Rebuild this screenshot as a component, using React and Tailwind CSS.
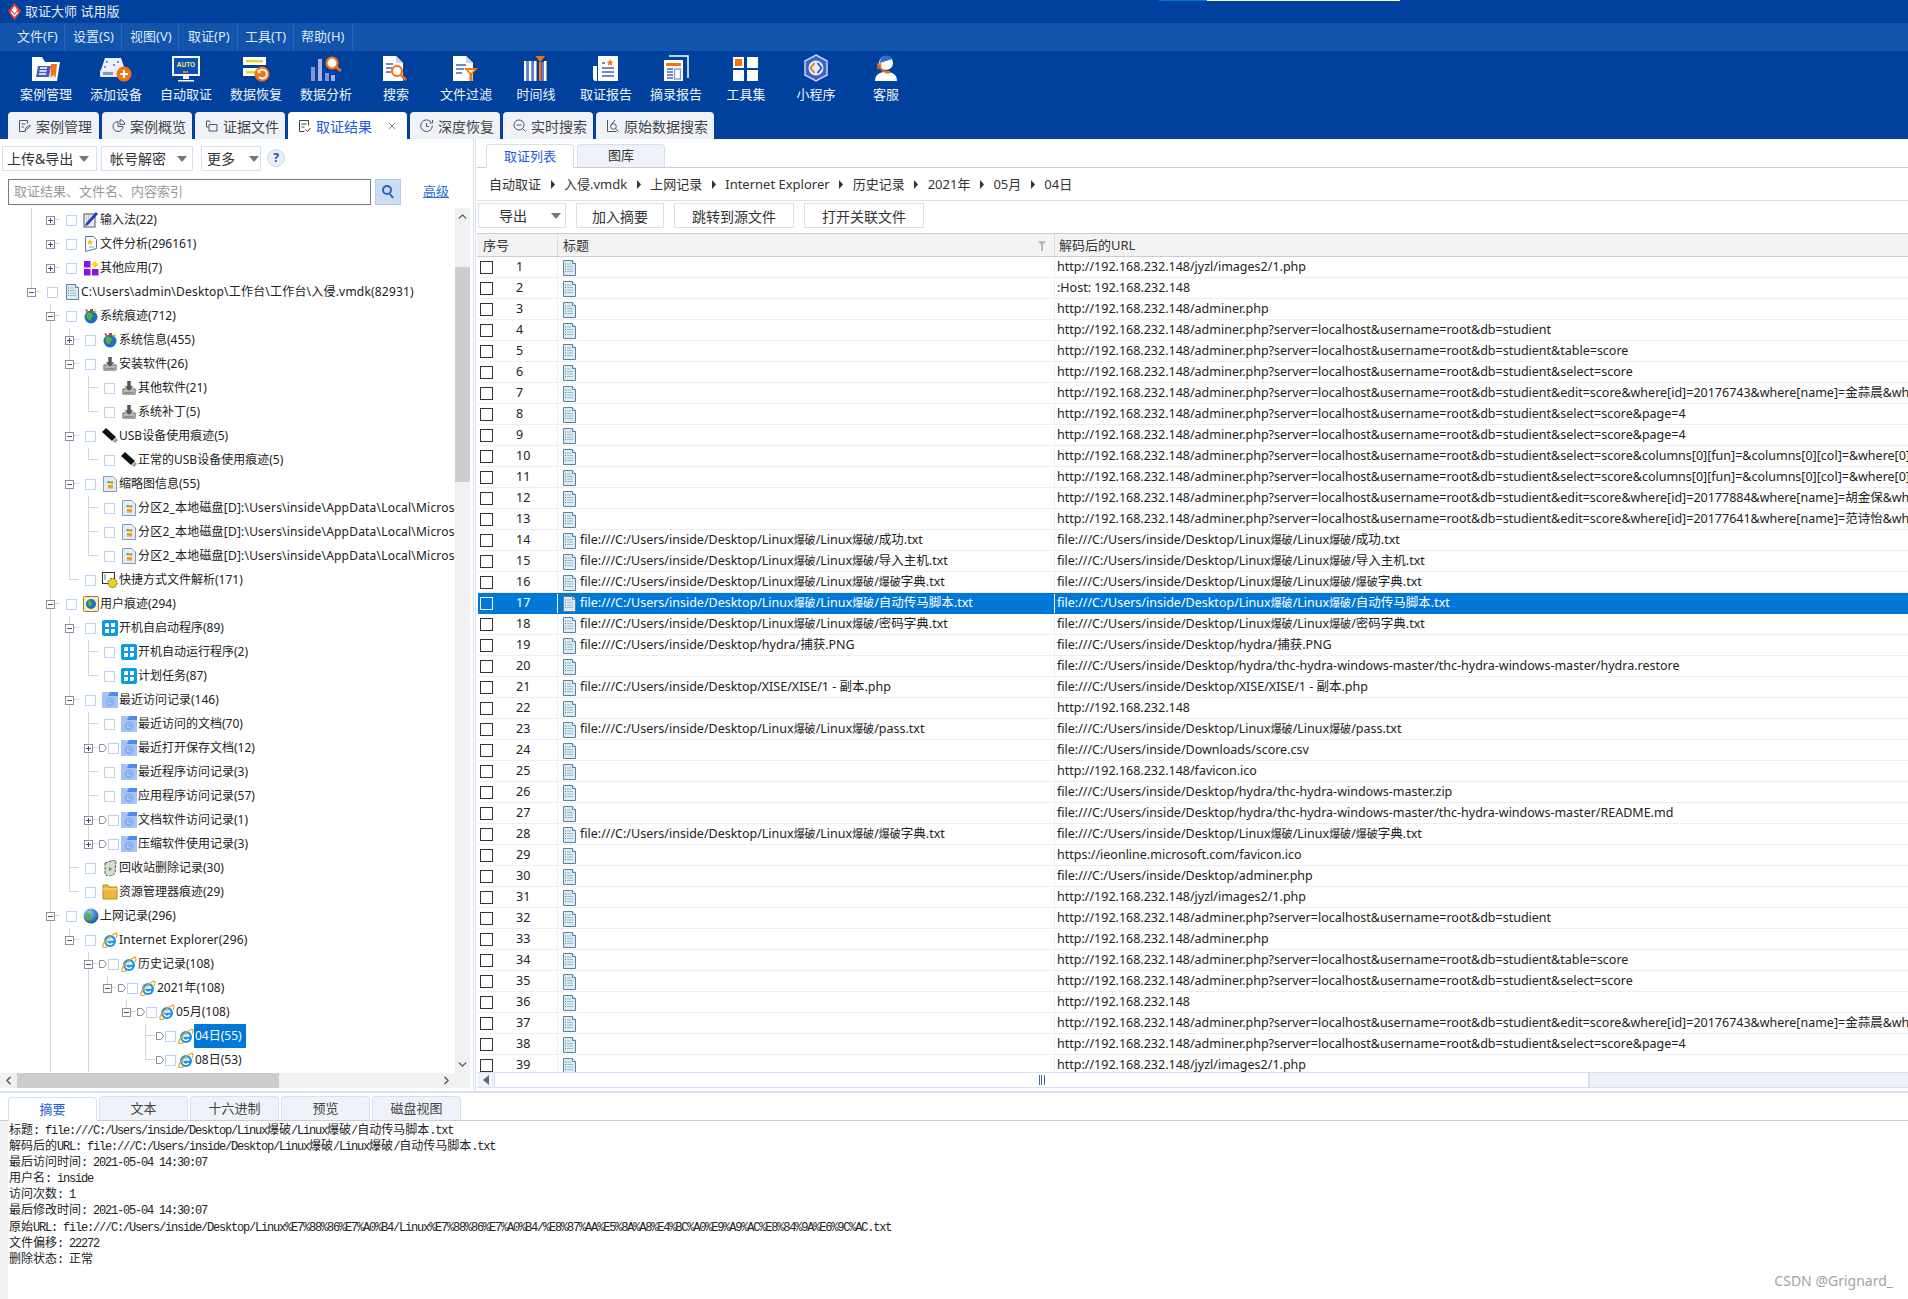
import { ChevronUp, ChevronDown, ChevronLeft, ChevronRight, X } from "lucide-react";

// ---------- toolbar icons ----------
const PERI = "#8693d6";
const ORG = "#f5730f";

const CaseIcon = () => (
  <svg width="32" height="26" viewBox="0 0 32 26">
    <path d="M2 1h10l3 5h15l-3 19H2z" fill="#fff" />
    <path d="M8 10h13l-2 11H6z" fill="#4a5fc0" />
    <path d="M10 12h7M9.500 15h7M9 18h7" stroke="#fff" strokeWidth="1.5" />
    <path d="M21 8h6l-1.500 14-2-3-3 3z" fill={ORG} />
  </svg>
);
const DeviceIcon = () => (
  <svg width="32" height="26" viewBox="0 0 32 26">
    <path d="M5 2h16l4 12H1z" fill="#eef1fb" />
    <circle cx="7" cy="6" r="1" fill="#5a6cc8" />
    <circle cx="18" cy="6" r="1" fill="#5a6cc8" />
    <circle cx="5" cy="11" r="1" fill="#5a6cc8" />
    <circle cx="14" cy="9" r="1" fill="#5a6cc8" />
    <rect x="0" y="14" width="24" height="7" rx="1" fill="#e6eaf8" />
    <rect x="3" y="16" width="10" height="3" fill={PERI} />
    <circle cx="24" cy="18" r="7.500" fill={ORG} />
    <path d="M24 14v8M20 18h8" stroke="#fff" strokeWidth="2.200" />
  </svg>
);
const AutoIcon = () => (
  <svg width="28" height="26" viewBox="0 0 28 26">
    <rect x="0" y="0" width="28" height="20" fill="#fff" />
    <rect x="2" y="2" width="24" height="16" fill="#0a4fc0" />
    <text x="14" y="11" textAnchor="middle" fontSize="6.500" fontWeight="700" fill="#ffe94a" fontFamily="Liberation Sans">AUTO</text>
    <rect x="11" y="15" width="5" height="2" fill={ORG} />
    <path d="M11 20h6v3h-6zM6 24h16v1.500H6z" fill="#fff" />
  </svg>
);
const RecoverIcon = () => (
  <svg width="28" height="26" viewBox="0 0 28 26">
    <rect x="1" y="1" width="23" height="8" fill="#fff" />
    <rect x="4" y="4" width="17" height="2.500" fill="#e8d52a" />
    <rect x="1" y="12" width="17" height="8" fill="#fff" />
    <rect x="4" y="15" width="10" height="2.500" fill="#e8d52a" />
    <circle cx="20" cy="18" r="7.500" fill={ORG} />
    <path d="M17 15a4.500 4.500 0 1 1 0 6" fill="none" stroke="#fff" strokeWidth="1.800" />
    <path d="M15 13.500l1 4 3.500-1.500z" fill="#fff" />
  </svg>
);
const AnalyzeIcon = () => (
  <svg width="32" height="26" viewBox="0 0 32 26">
    <rect x="1" y="11" width="4" height="14" fill={PERI} />
    <rect x="8" y="3" width="4" height="22" fill="#a8b2e6" />
    <rect x="15" y="17" width="4" height="8" fill={PERI} />
    <rect x="21" y="19" width="4" height="6" fill="#a8b2e6" />
    <circle cx="22" cy="7" r="5.500" fill="#fff" stroke={ORG} strokeWidth="2.200" />
    <path d="M26 11l5 4" stroke={ORG} strokeWidth="2.500" />
  </svg>
);
const SearchDocIcon = () => (
  <svg width="26" height="26" viewBox="0 0 26 26">
    <path d="M0 0h13l7 7v18H0z" fill="#fff" />
    <path d="M13 0l7 7h-7z" fill="#c9cfee" />
    <path d="M3 8h7M3 12h6M3 16h5" stroke="#4a5fc0" strokeWidth="1.600" />
    <circle cx="14" cy="15" r="5" fill="#fff" stroke={ORG} strokeWidth="2.200" />
    <path d="M18 19l5 5" stroke={ORG} strokeWidth="2.500" />
  </svg>
);
const FilterIcon = () => (
  <svg width="26" height="26" viewBox="0 0 26 26">
    <path d="M0 0h13l7 7v18H0z" fill="#fff" />
    <path d="M13 0l7 7h-7z" fill="#c9cfee" />
    <path d="M3 9h10M3 13h8M3 17h6" stroke="#4a5fc0" strokeWidth="1.600" />
    <path d="M11 12h14l-5.500 6v7h-3v-7z" fill={ORG} />
    <path d="M15 14h6l-3 3z" fill="#fff" />
  </svg>
);
const TimelineIcon = () => (
  <svg width="26" height="26" viewBox="0 0 26 26">
    <path d="M1 5h2.500v20H1zM6 5h2.500v20H6zM11 5h2.500v20H11zM21 5h2.500v20H21z" fill="#fff" />
    <path d="M3.500 5H6v20H3.500zM8.500 5H11v20H8.500z" fill="#6c7ccc" />
    <rect x="16" y="6" width="2.500" height="19" fill={ORG} />
    <path d="M12.500 0h9.500l-4.750 6z" fill={ORG} />
    <rect x="19" y="6" width="2" height="19" fill="#6c7ccc" />
  </svg>
);
const ReportIcon = () => (
  <svg width="26" height="26" viewBox="0 0 26 26">
    <path d="M5 0h20v25H5z" fill="#fff" />
    <path d="M0 10h4v15H3a3 3 0 0 1-3-3z" fill="#fff" />
    <path d="M17 3l1 2.500 2.500.2-2 1.600.7 2.500-2.200-1.400-2.200 1.400.7-2.500-2-1.600 2.500-.2z" fill={ORG} />
    <path d="M9 7h3M9 12h12M9 16h12M9 20h12" stroke="#4a5fc0" strokeWidth="1.700" />
  </svg>
);
const ExcerptIcon = () => (
  <svg width="26" height="27" viewBox="0 0 26 27">
    <path d="M6 1h19v22" fill="none" stroke="#fff" strokeWidth="1.500" />
    <path d="M1 5h19v21H1z" fill="#fff" />
    <rect x="3" y="8" width="15" height="3" fill={ORG} />
    <path d="M4 14h6M4 17h6M4 20h6M4 23h6" stroke="#4a5fc0" strokeWidth="1.300" />
    <rect x="11.500" y="14" width="6" height="10" fill="none" stroke="#8693d6" strokeWidth="1.300" />
  </svg>
);
const ToolsIcon = () => (
  <svg width="26" height="26" viewBox="0 0 26 26">
    <rect x="0" y="1" width="11" height="11" fill="#fff" />
    <rect x="2" y="3" width="7" height="7" fill={ORG} />
    <rect x="14" y="1" width="11" height="11" fill="#fff" />
    <rect x="0" y="14" width="11" height="11" fill="#fff" />
    <rect x="14" y="14" width="11" height="11" fill="#fff" />
  </svg>
);
const MiniIcon = () => (
  <svg width="28" height="28" viewBox="0 0 28 28">
    <path d="M14 1l11 6v14l-11 6-11-6V7z" fill="#3a62c8" stroke="#c6d4f4" strokeWidth="1.500" />
    <circle cx="14" cy="14" r="7.500" fill="#e4ebfb" />
    <path d="M12.500 9l-4 5 4 5" fill="none" stroke={ORG} strokeWidth="1.800" />
    <path d="M15.500 9l4 5-4 5" fill="none" stroke="#2d55bd" strokeWidth="1.800" />
  </svg>
);
const ServiceIcon = () => (
  <svg width="26" height="28" viewBox="0 0 26 28">
    <circle cx="13" cy="9" r="7" fill="#fff" />
    <path d="M7 9a6.500 7 0 0 1 12-4c-3 1-6 2-12 4z" fill="#2f6bd1" />
    <path d="M2 27c0-6 4-9 11-9s11 3 11 9z" fill="#fff" />
    <path d="M5 10v4h2.500v-4zM8 15c2 3 5 3 8 3" fill="none" stroke={ORG} strokeWidth="1.600" />
    <rect x="12" y="17" width="5" height="2.500" fill={ORG} />
  </svg>
);

// ---------- tab icons ----------
const TabSvg = ({ children, active }) => (
  <svg width="13" height="14" viewBox="0 0 13 14" fill="none" stroke={active ? "#444" : "#555"} strokeWidth="1">
    {children}
  </svg>
);
const tabIcons = [
  <TabSvg><path d="M1.500 1.500h8v3M1.500 1.500v11h6M3.500 5h4M3.500 8h2.500M7 11.500l.5-2 4-3.500 1 1-4 3.500z" /></TabSvg>,
  <TabSvg><path d="M6 2.500a5 5 0 1 0 5 5H6zM8 .8v4.700h4.700A4.700 4.700 0 0 0 8 .8z" /></TabSvg>,
  <TabSvg><path d="M1.500 2h3l1 1.500M1.500 2v6h2M4 5.500h8v6.500H4z" /></TabSvg>,
  <TabSvg active><path d="M1.500 1.500h9v5M1.500 1.500v11h5M3.500 5h5M3.500 8h3M7.500 10.500l2 2 3-3.500" /></TabSvg>,
  <TabSvg><path d="M11 3a5.800 5.800 0 1 0 1.300 3.500M12.500 1v3h-3M6.500 4v3.500h2.500" /></TabSvg>,
  <TabSvg><circle cx="6" cy="6" r="5" /><path d="M3.500 6h5M9.500 9.500l3 3" /></TabSvg>,
  <TabSvg><path d="M1.500 1v11.500h9M9 1L5 6" /><circle cx="7.500" cy="7.500" r="2.800" /><path d="M9.500 9.500l3 3" /></TabSvg>,
];

// ---------- tree icons ----------
const Pen = () => (
  <svg width="16" height="16" viewBox="0 0 16 16">
    <rect x="1" y="2" width="11" height="13" fill="#eee" stroke="#555" />
    <path d="M3 4h7M3 6h7M3 8h5" stroke="#999" strokeDasharray="1 1" />
    <path d="M2 14l3-1L15 2l-2-2L3 11z" fill="#1a3fd0" />
  </svg>
);
const DocStar = () => (
  <svg width="16" height="16" viewBox="0 0 16 16">
    <path d="M2.500.500h8l3 3v9l-11 3z" fill="#fafcff" stroke="#4f78a8" />
    <path d="M7 3l1 2 2 .3-1.500 1.500.4 2L7 7.800 5.100 8.800l.4-2L4 5.300 6 5z" fill="#f0c020" />
    <path d="M6 11h5" stroke="#7ba6d0" />
  </svg>
);
const Apps = () => (
  <svg width="16" height="16" viewBox="0 0 16 16">
    <rect x="1" y="1" width="6.500" height="6.500" fill="#8a10f0" />
    <rect x="1" y="9" width="6.500" height="6.500" fill="#8a10f0" />
    <rect x="9" y="9" width="6.500" height="6.500" fill="#8a10f0" />
    <path d="M12 1l3.500 3.500L12 8 8.500 4.500z" fill="#ffd800" />
  </svg>
);
const Doc = ({ w = 13, h = 16 }) => (
  <svg width={w} height={h} viewBox="0 0 13 16">
    <path d="M.5.500h9l3 3v12H.5z" fill="#dcebf5" stroke="#5f7f9f" />
    <path d="M9.500.500v3h3" fill="#fff" stroke="#5f7f9f" />
    <path d="M4 4h4M4 6.500h6M4 9h6M4 11.500h6" stroke="#9cbcd4" />
    <path d="M2 4h1M2 6.500h1M2 9h1M2 11.500h1" stroke="#3a9a5a" />
  </svg>
);
const Globe = ({ marks }) => (
  <svg width="16" height="16" viewBox="0 0 16 16">
    <circle cx="8" cy="9" r="6.500" fill="#1f6fc8" />
    <path d="M5 4c2 1 4 1 5 3s-2 2-2 4-3 1-4-1-1-4 1-6z" fill="#53b03a" />
    {marks && <path d="M2 1l3 1-1 3zM7 1h3v2H7z" fill="#e03c20" />}
    {marks && <path d="M12 1l2 3-3 1z" fill="#f4c020" />}
  </svg>
);
const Earth = () => (
  <svg width="16" height="16" viewBox="0 0 16 16">
    <defs>
      <radialGradient id="earth" cx="35%" cy="30%" r="80%">
        <stop offset="0%" stopColor="#8ed0ff" />
        <stop offset="100%" stopColor="#0d4a98" />
      </radialGradient>
    </defs>
    <circle cx="8" cy="8" r="7.500" fill="url(#earth)" />
    <path d="M3 5c2-1 4 0 5 2s0 4-2 5-3-1-3-3z" fill="#5cb03c" />
  </svg>
);
const Install = () => (
  <svg width="14" height="16" viewBox="0 0 16 16">
    <path d="M1 9h14v6H1z" fill="#bbb" stroke="#666" />
    <path d="M6 0h4v6h3l-5 5-5-5h3z" fill="#555" />
    <path d="M3 13h10" stroke="#777" />
  </svg>
);
const Usb = () => (
  <svg width="16" height="16" viewBox="0 0 16 16">
    <path d="M0 4l4-4 10 9-4 4z" fill="#111" />
    <path d="M11 13l3-3 2 2-3 3z" fill="#999" />
  </svg>
);
const Thumb = () => (
  <svg width="14" height="16" viewBox="0 0 14 16">
    <path d="M.500.500h9.500l3.500 3.500v11.500H.500z" fill="#e4ecf8" stroke="#7f9cc0" />
    <path d="M4 7a2 2 0 0 1 4 0" fill="#5aa83c" />
    <path d="M5 9h5v3.500H5z" fill="#f0a020" />
    <circle cx="9" cy="6.500" r="1.500" fill="#d8a010" />
  </svg>
);
const Shortcut = () => (
  <svg width="16" height="16" viewBox="0 0 16 16">
    <rect x="0.500" y="0.500" width="12" height="11" fill="#fff" stroke="#333" />
    <path d="M2 3h2M2 5h2M2 7h2" stroke="#3a9a5a" />
    <circle cx="10.500" cy="11" r="4.500" fill="#f4d010" stroke="#555" strokeDasharray="2 1" />
  </svg>
);
const UserGlobe = () => (
  <svg width="16" height="16" viewBox="0 0 16 16">
    <rect x="0.500" y="0.500" width="15" height="15" rx="1" fill="#f4eac8" stroke="#9a7a2a" />
    <circle cx="8" cy="8" r="5" fill="#1f6fc8" />
    <path d="M6 4c2 1 3 2 3 4s-2 3-3 2-2-4 0-6z" fill="#53b03a" />
  </svg>
);
const Startup = () => (
  <svg width="16" height="16" viewBox="0 0 16 16">
    <rect width="16" height="16" rx="2" fill="#0a9ae8" />
    <path d="M3 7V4.500A1.500 1.500 0 0 1 4.500 3H7v4zM9 3h4v4H9zM3 9h4v4H3zM9 9h4v1.500A2.500 2.500 0 0 1 10.500 13H9z" fill="#fff" />
  </svg>
);
const Recent = () => (
  <svg width="16" height="16" viewBox="0 0 16 16">
    <rect width="16" height="16" fill="#a5c2f7" />
    <path d="M8 0h8v4H6z" fill="#4d8df2" />
    <circle cx="8" cy="10" r="3.500" fill="none" stroke="#6f9be8" />
    <path d="M8 8v2h2" fill="none" stroke="#6f9be8" />
  </svg>
);
const Bin = () => (
  <svg width="16" height="16" viewBox="0 0 16 16">
    <path d="M3 3l9-3 2 1-1 12-3 3H5l-2-2z" fill="#d4dcd0" stroke="#555" strokeDasharray="3 1" />
    <path d="M7 7l3 2-3 2z" fill="#3a9a3a" />
  </svg>
);
const Folder = () => (
  <svg width="16" height="16" viewBox="0 0 16 16">
    <path d="M1 1h5l1 2h8v12H1z" fill="#eeb63c" stroke="#c08a20" />
    <path d="M1 5h14" stroke="#f9e2a0" />
  </svg>
);
const Ie = () => (
  <svg width="16" height="16" viewBox="0 0 16 16">
    <circle cx="8" cy="9" r="6" fill="#1c96e8" />
    <path d="M4.500 8h7M5 8a3.200 3.200 0 0 1 6 0" fill="none" stroke="#fff" strokeWidth="1.400" />
    <path d="M4.800 9.500a3.200 3.200 0 0 0 5.800 1.500" fill="none" stroke="#fff" strokeWidth="1.400" />
    <path d="M1 15C0 12 6 4 14 1c1.500 1 1 3 0 5M1 15c1 1 3 .5 5-.5" fill="none" stroke="#eea020" strokeWidth="1.200" />
  </svg>
);

const r = (level, guides, exp, icon, label, opts = {}) => ({ level, guides, exp, icon, label, ...opts });
const g2 = [2];
const g23 = [2, 3];
const g24 = [2, 4];
const thumbPath = "分区2_本地磁盘[D]:\\Users\\inside\\AppData\\Local\\Micros";
const treeRows = [
  r(2, [1], "+", <Pen />, "输入法(22)", { stubOnly: true }),
  r(2, [1], "+", <DocStar />, "文件分析(296161)", { stubOnly: true }),
  r(2, [1], "+", <Apps />, "其他应用(7)", { stubOnly: true }),
  r(1, [], "-", <Doc />, "C:\\Users\\admin\\Desktop\\工作台\\工作台\\入侵.vmdk(82931)", { wide: true }),
  r(2, [], "-", <Globe marks />, "系统痕迹(712)", { next: true }),
  r(3, g2, "+", <Globe marks />, "系统信息(455)", { next: true }),
  r(3, g2, "-", <Install />, "安装软件(26)", { next: true }),
  r(4, g23, null, <Install />, "其他软件(21)", { next: true }),
  r(4, g23, null, <Install />, "系统补丁(5)"),
  r(3, g2, "-", <Usb />, "USB设备使用痕迹(5)", { next: true }),
  r(4, g23, null, <Usb />, "正常的USB设备使用痕迹(5)"),
  r(3, g2, "-", <Thumb />, "缩略图信息(55)", { next: true }),
  r(4, g23, null, <Thumb />, thumbPath, { next: true, wide: true }),
  r(4, g23, null, <Thumb />, thumbPath, { next: true, wide: true }),
  r(4, g23, null, <Thumb />, thumbPath, { wide: true }),
  r(3, g2, null, <Shortcut />, "快捷方式文件解析(171)"),
  r(2, [], "-", <UserGlobe />, "用户痕迹(294)", { next: true }),
  r(3, g2, "-", <Startup />, "开机自启动程序(89)", { next: true }),
  r(4, g23, null, <Startup />, "开机自动运行程序(2)", { next: true }),
  r(4, g23, null, <Startup />, "计划任务(87)"),
  r(3, g2, "-", <Recent />, "最近访问记录(146)", { next: true }),
  r(4, g23, null, <Recent />, "最近访问的文档(70)", { next: true }),
  r(4, g23, "+", <Recent />, "最近打开保存文档(12)", { next: true, tag: true }),
  r(4, g23, null, <Recent />, "最近程序访问记录(3)", { next: true }),
  r(4, g23, null, <Recent />, "应用程序访问记录(57)", { next: true }),
  r(4, g23, "+", <Recent />, "文档软件访问记录(1)", { next: true, tag: true }),
  r(4, g23, "+", <Recent />, "压缩软件使用记录(3)", { tag: true }),
  r(3, g2, null, <Bin />, "回收站删除记录(30)", { next: true }),
  r(3, g2, null, <Folder />, "资源管理器痕迹(29)"),
  r(2, [], "-", <Earth />, "上网记录(296)", { next: true }),
  r(3, g2, "-", <Ie />, "Internet Explorer(296)", { wide: true }),
  r(4, g2, "-", <Ie />, "历史记录(108)", { next: true, tag: true }),
  r(5, g24, "-", <Ie />, "2021年(108)", { tag: true }),
  r(6, g24, "-", <Ie />, "05月(108)", { tag: true }),
  r(7, g24, null, <Ie />, "04日(55)", { tag: true, next: true, selected: true }),
  r(7, g24, null, <Ie />, "08日(53)", { tag: true }),
];

const TreeRow = ({ row }) => (
  <div className="flex h-[24px] items-center whitespace-nowrap">
    {Array.from({ length: row.level - 1 }, (_, i) => (
      <div key={i} className="h-full w-[19px] shrink-0 pl-[9px]">
        {row.guides.includes(i + 1) && <div className="h-full border-l border-[#d6d6d6]" />}
      </div>
    ))}
    <div className="relative h-full w-[19px] shrink-0 pl-[9px]">
      <div className={row.stubOnly ? "mt-[11px] h-px w-[10px] bg-[#d6d6d6]" : "h-[12px] w-[10px] border-b border-l border-[#d6d6d6]"} />
      {row.next && <div className="h-[12px] border-l border-[#d6d6d6]" />}
      {row.exp && (
        <div className="absolute left-[5px] top-[8px] flex size-[9px] items-center justify-center border border-[#8b8f99] bg-white">
          <svg width="7" height="7" viewBox="0 0 7 7">
            <path d="M1 3.500h5" stroke="#3d4f80" />
            {row.exp === "+" && <path d="M3.500 1v5" stroke="#3d4f80" />}
          </svg>
        </div>
      )}
    </div>
    {row.tag ? (
      <>
        <svg className="ml-px shrink-0" width="8" height="8" viewBox="0 0 8 8">
          <path d="M.500.500h4.500l2.500 3.500-2.500 3.500H.500z" fill="#fff" stroke="#8b8f99" />
        </svg>
        <div className="ml-px size-[11px] shrink-0 border border-[#bcd0f5] bg-white" />
        <div className="ml-[2px] flex w-[16px] shrink-0 justify-center">{row.icon}</div>
      </>
    ) : (
      <>
        <div className="ml-[6px] size-[11px] shrink-0 border border-[#bcd0f5] bg-white" />
        <div className="ml-[6px] flex w-[16px] shrink-0 justify-center">{row.icon}</div>
      </>
    )}
    <span className={row.selected ? "flex h-full items-center bg-[#0078d7] pl-px pr-[4px] text-white" : row.wide ? "ml-px tracking-[0.2px]" : "ml-px"}>
      {row.label}
    </span>
  </div>
);

// ---------- table ----------
const H = "http://192.168.232.148";
const A = H + "/adminer.php";
const S = A + "?server=localhost&username=root&db=studient";
const L = "file:///C:/Users/inside/Desktop/Linux爆破/Linux爆破/";
const HY = "file:///C:/Users/inside/Desktop/hydra/";
const tableRows = [
  ["", H + "/jyzl/images2/1.php"],
  ["", ":Host: 192.168.232.148"],
  ["", A],
  ["", S],
  ["", S + "&table=score"],
  ["", S + "&select=score"],
  ["", S + "&edit=score&where[id]=20176743&where[name]=金蒜晨&wh"],
  ["", S + "&select=score&page=4"],
  ["", S + "&select=score&page=4"],
  ["", S + "&select=score&columns[0][fun]=&columns[0][col]=&where[0]"],
  ["", S + "&select=score&columns[0][fun]=&columns[0][col]=&where[0]"],
  ["", S + "&edit=score&where[id]=20177884&where[name]=胡金保&wh"],
  ["", S + "&edit=score&where[id]=20177641&where[name]=范诗怡&wh"],
  [L + "成功.txt", L + "成功.txt"],
  [L + "导入主机.txt", L + "导入主机.txt"],
  [L + "爆破字典.txt", L + "爆破字典.txt"],
  [L + "自动传马脚本.txt", L + "自动传马脚本.txt"],
  [L + "密码字典.txt", L + "密码字典.txt"],
  [HY + "捕获.PNG", HY + "捕获.PNG"],
  ["", HY + "thc-hydra-windows-master/thc-hydra-windows-master/hydra.restore"],
  ["file:///C:/Users/inside/Desktop/XISE/XISE/1 - 副本.php", "file:///C:/Users/inside/Desktop/XISE/XISE/1 - 副本.php"],
  ["", H],
  [L + "pass.txt", L + "pass.txt"],
  ["", "file:///C:/Users/inside/Downloads/score.csv"],
  ["", H + "/favicon.ico"],
  ["", HY + "thc-hydra-windows-master.zip"],
  ["", HY + "thc-hydra-windows-master/thc-hydra-windows-master/README.md"],
  [L + "爆破字典.txt", L + "爆破字典.txt"],
  ["", "https://ieonline.microsoft.com/favicon.ico"],
  ["", "file:///C:/Users/inside/Desktop/adminer.php"],
  ["", H + "/jyzl/images2/1.php"],
  ["", S],
  ["", A],
  ["", S + "&table=score"],
  ["", S + "&select=score"],
  ["", H],
  ["", S + "&edit=score&where[id]=20176743&where[name]=金蒜晨&wh"],
  ["", S + "&select=score&page=4"],
  ["", H + "/jyzl/images2/1.php"],
];
const SELECTED = 17;

// 爆破 comes out narrower than the rest of the row in the original
const CellText = ({ text }) => (
  <>
    {text.split(/(爆破)/).map((part, i) =>
      i % 2 ? <span key={i} className="text-[11px]">{part}</span> : part
    )}
  </>
);

// detail text: wide CJK next to a narrow typewriter latin
const Detail = ({ text }) => (
  <div className="h-[16.1px] whitespace-nowrap">
    {text.split(/([\u4e00-\u9fff]+)/).map((part, i) =>
      i % 2 ? (
        <span key={i} className="font-['Noto_Sans_CJK_SC',sans-serif] tracking-normal">{part}</span>
      ) : (
        <span key={i}>{part}</span>
      )
    )}
  </div>
);
const details = [
  "标题: " + L + "自动传马脚本.txt",
  "解码后的URL: " + L + "自动传马脚本.txt",
  "最后访问时间: 2021-05-04 14:30:07",
  "用户名: inside",
  "访问次数: 1",
  "最后修改时间: 2021-05-04 14:30:07",
  "原始URL: file:///C:/Users/inside/Desktop/Linux%E7%88%86%E7%A0%B4/Linux%E7%88%86%E7%A0%B4/%E8%87%AA%E5%8A%A8%E4%BC%A0%E9%A9%AC%E8%84%9A%E6%9C%AC.txt",
  "文件偏移: 22272",
  "删除状态: 正常",
];

const Caret = ({ className = "" }) => (
  <svg className={className} width="10" height="6" viewBox="0 0 10 6">
    <path d="M0 0h10L5 6z" fill="#777" />
  </svg>
);
const Crumb = () => (
  <svg className="mx-[8.500px]" width="6" height="9" viewBox="0 0 6 9">
    <path d="M1 0l4 4.500L1 9z" fill="#333" />
  </svg>
);

const menus = [
  ["文件(F)", "w-[65px] pl-[17px]"],
  ["设置(S)", "w-[57px] pl-[8px]"],
  ["视图(V)", "w-[57px] pl-[8px]"],
  ["取证(P)", "w-[59px] pl-[9px]"],
  ["工具(T)", "w-[56px] pl-[7px]"],
  ["帮助(H)", "w-[59px] pl-[7px]"],
];
const tools = [
  ["案例管理", <CaseIcon />], ["添加设备", <DeviceIcon />], ["自动取证", <AutoIcon />], ["数据恢复", <RecoverIcon />],
  ["数据分析", <AnalyzeIcon />], ["搜索", <SearchDocIcon />], ["文件过滤", <FilterIcon />], ["时间线", <TimelineIcon />],
  ["取证报告", <ReportIcon />], ["摘录报告", <ExcerptIcon />], ["工具集", <ToolsIcon />], ["小程序", <MiniIcon />], ["客服", <ServiceIcon />],
];
const tabs = [
  ["案例管理", "w-[91px]"], ["案例概览", "w-[90px]"], ["证据文件", "w-[90px]"], ["取证结果", "w-[119px]"],
  ["深度恢复", "w-[90px]"], ["实时搜索", "w-[90px]"], ["原始数据搜索", "w-[118px]"],
];
const crumbs = ["自动取证", "入侵.vmdk", "上网记录", "Internet Explorer", "历史记录", "2021年", "05月", "04日"];

export default function App() {
  return (
    <div className="flex h-[1299px] w-[1908px] flex-col overflow-hidden bg-white font-['Noto_Sans','Noto_Sans_CJK_SC',sans-serif] text-[12px] text-[#222]">
      {/* title */}
      <div className="relative flex h-[23px] shrink-0 items-center bg-[#00419e] pl-[7px] text-[13px] text-[#e4ebf8]">
        <svg width="15" height="18" viewBox="0 0 15 18">
          <path d="M7.500 0l6.500 8-6.500 9.500L1 8z" fill="#e8392a" />
          <path d="M7.500 3l3 4-3 3.500-3-3.500z" fill="#fff" />
          <path d="M4 9l3.500 4 3.500-4" fill="none" stroke="#fff" strokeWidth="1.300" />
        </svg>
        <span className="ml-[3px]">取证大师 试用版</span>
        <div className="absolute left-[1159px] top-0 h-px w-[48px] bg-[#0078d7]" />
        <div className="absolute left-[1207px] top-0 h-px w-[193px] bg-white" />
      </div>
      {/* menu */}
      <div className="flex h-[28px] shrink-0 items-center bg-[#1253ac] text-[13px] text-[#dfe8f7]">
        {menus.map(([m, cls]) => (
          <div key={m} className={`flex h-full items-center border-r border-[#2a66b8] ${cls}`}>{m}</div>
        ))}
      </div>
      {/* toolbar */}
      <div className="h-[88px] shrink-0 bg-[#00419e]">
        <div className="flex h-[61px] pl-[11px]">
          {tools.map(([t, icon]) => (
            <div key={t} className="flex w-[70px] flex-col items-center text-[13px] text-[#f0f4fc]">
              <div className="flex h-[33px] w-full items-end justify-center pb-[2px]">{icon}</div>
              <div className="mt-px leading-[18px]">{t}</div>
            </div>
          ))}
        </div>
        <div className="flex h-[27px] gap-[3px] pl-[8px] text-[14px]">
          {tabs.map(([t, w], i) => (
            <div
              key={t}
              className={`flex h-full items-center rounded-t-[4px] pl-[10px] ${w} ${i === 3 ? "bg-white text-[#1e5ae0]" : "bg-[#eff3f9] text-[#444]"}`}
            >
              {tabIcons[i]}
              <span className="ml-[5px] pt-px">{t}</span>
              {i === 3 && <X className="ml-[14px] text-[#555]" size={12} strokeWidth={1.500} />}
            </div>
          ))}
        </div>
      </div>

      {/* body */}
      <div className="flex h-[952px] shrink-0">
        {/* left */}
        <div className="flex w-[473px] shrink-0 flex-col">
          <div className="mt-[7px] flex h-[25px] items-stretch pl-[2px] text-[14px] text-[#333]">
            <div className="flex w-[95px] items-center border border-[#d5e0f0] pl-[4px]">上传&导出<Caret className="ml-[6px]" /></div>
            <div className="ml-[4px] flex w-[92px] items-center border border-[#d5e0f0] pl-[8px]">帐号解密<Caret className="ml-[11px]" /></div>
            <div className="ml-[8px] flex w-[60px] items-center border border-[#d5e0f0] pl-[5px]">更多<Caret className="ml-[14px]" /></div>
            <div className="ml-[6px] mt-[3px] flex size-[18px] items-center justify-center rounded-full border border-[#cfd8e8] bg-[#e9eff8] text-[12px] font-bold text-[#1e4fb8]">?</div>
          </div>
          <div className="mt-[8px] flex h-[26px] items-center pl-[8px]">
            <div className="flex h-full w-[363px] items-center border border-[#7a7a7a] pl-[5px] text-[13px] text-[#999]">取证结果、文件名、内容索引</div>
            <div className="ml-[4px] flex h-[26px] w-[26px] items-center justify-center border border-[#b8cdf0] bg-[#cbdcf7]">
              <svg width="14" height="16" viewBox="0 0 14 16" fill="none" stroke="#2f5fb0" strokeWidth="2">
                <circle cx="6" cy="6" r="4" />
                <path d="M9 10l3 4" />
              </svg>
            </div>
            <a className="ml-[22px] text-[13px] text-[#1e6fd0] underline">高级</a>
          </div>
          <div className="mt-[3px] flex h-[865px]">
            <div className="h-full w-[455px] overflow-hidden pl-[22px]">
              {treeRows.map((row, i) => <TreeRow key={i} row={row} />)}
            </div>
            <div className="flex h-full w-[15px] flex-col bg-[#f1f1f1]">
              <div className="flex h-[17px] items-center justify-center"><ChevronUp size={13} strokeWidth={2.500} className="text-[#555]" /></div>
              <div className="mt-[42px] h-[215px] bg-[#cdcdcd]" />
              <div className="flex-1" />
              <div className="flex h-[17px] items-center justify-center"><ChevronDown size={13} strokeWidth={2.500} className="text-[#555]" /></div>
            </div>
          </div>
          <div className="flex h-[15px] w-[470px] items-center bg-[#f1f1f1]">
            <div className="flex w-[17px] justify-center"><ChevronLeft size={13} strokeWidth={2.500} className="text-[#555]" /></div>
            <div className="h-full w-[262px] bg-[#cdcdcd]" />
            <div className="flex-1" />
            <div className="mr-[15px] flex w-[17px] justify-center"><ChevronRight size={13} strokeWidth={2.500} className="text-[#555]" /></div>
          </div>
        </div>
        <div className="w-[3px] shrink-0 border-x border-[#d8e2f2]" />

        {/* right */}
        <div className="flex min-w-0 flex-1 flex-col pl-[1px]">
          <div className="flex h-[29px] shrink-0 items-end gap-[3px] border-b border-[#ccccd8] pl-[9px] text-[13px]">
            <div className="-mb-px flex h-[24px] w-[88px] items-center justify-center rounded-t-[4px] border border-b-0 border-[#d5e0f0] bg-white text-[#1e5ae0]">取证列表</div>
            <div className="flex h-[23px] w-[88px] items-center justify-center rounded-t-[4px] border border-b-0 border-[#d5e0f0] bg-[#eff3f9] text-[#333]">图库</div>
          </div>
          <div className="flex h-[33px] shrink-0 items-center border-b border-[#d5e0f0] pl-[12px] pt-px text-[13px] text-[#333]">
            {crumbs.map((c, i) => (
              <span key={c} className="flex items-center">
                {i > 0 && <Crumb />}
                {c}
              </span>
            ))}
          </div>
          <div className="flex h-[32px] shrink-0 gap-[10px] pl-px pt-[2px] text-[14px] text-[#333]">
            <div className="flex h-[25px] w-[88px] items-center border border-[#d5e0f0] pl-[20px]">导出<Caret className="ml-[24px]" /></div>
            <div className="flex h-[25px] w-[88px] items-center justify-center border border-[#d5e0f0] pt-px">加入摘要</div>
            <div className="flex h-[25px] w-[120px] items-center justify-center border border-[#d5e0f0] pt-px">跳转到源文件</div>
            <div className="flex h-[25px] w-[120px] items-center justify-center border border-[#d5e0f0] pt-px">打开关联文件</div>
          </div>
          <div className="flex h-[24px] shrink-0 items-center border-y border-[#ccccd8] bg-[#f3f3f3] pl-px text-[13px] text-[#333]">
            <div className="flex h-full w-[80px] items-center border-r border-[#dcdcdc] pl-[5px] pt-px">序号</div>
            <div className="flex h-full w-[497px] items-center justify-between border-r border-[#dcdcdc] pl-[5px] pr-[8px] pt-px">
              标题
              <svg width="8" height="10" viewBox="0 0 8 10"><path d="M0 0h8L5 4v6H3V4z" fill="#bbb" /></svg>
            </div>
            <div className="pl-[4px] pt-px">解码后的URL</div>
          </div>
          <div className="h-[815px] shrink-0 overflow-hidden pl-px text-[12.500px]">
            {tableRows.map(([title, url], i) => {
              const sel = i + 1 === SELECTED;
              return (
                <div key={i} className={`flex h-[21px] items-center whitespace-nowrap border-b pt-px ${sel ? "border-[#0078d7] bg-[#0078d7] text-white" : "border-[#eeeeee]"}`}>
                  <div className={`flex h-full w-[80px] shrink-0 items-center border-r pl-[2px] ${sel ? "border-white" : "border-[#eeeeee]"}`}>
                    <div className={`size-[13px] border ${sel ? "border-white" : "border-[#333]"}`} />
                    <span className="ml-[23px]">{i + 1}</span>
                  </div>
                  <div className={`flex h-full w-[497px] shrink-0 items-center overflow-hidden border-r pl-[5px] ${sel ? "border-white" : "border-[#eeeeee]"}`}>
                    <Doc />
                    <span className="ml-[4px]"><CellText text={title} /></span>
                  </div>
                  <div className="pl-[2px]"><CellText text={url} /></div>
                </div>
              );
            })}
          </div>
          <div className="flex h-[16px] shrink-0 border-y border-[#d5e0f0] pl-px">
            <div className="flex w-[17px] items-center justify-center border-r border-[#d5e0f0] bg-[#eff3f9]">
              <svg width="6" height="10" viewBox="0 0 6 10"><path d="M6 0v10L0 5z" fill="#666" /></svg>
            </div>
            <div className="flex w-[1095px] items-center justify-center border-r-2 border-[#d5e0f0]">
              <div className="h-[10px] w-[6px] border-x border-[#3f6fb8] px-[1.500px]"><div className="h-full w-full border-l border-[#3f6fb8]" /></div>
            </div>
            <div className="flex-1 bg-[#eef1f6]" />
          </div>
        </div>
      </div>

      <div className="h-[2px] shrink-0 bg-[#d6e1f2]" />

      {/* bottom */}
      <div className="relative flex min-h-0 flex-1 flex-col">
        <div className="flex h-[28px] shrink-0 items-end gap-[2px] border-b border-[#ccccd8] pl-[8px] text-[13px]">
          {["摘要", "文本", "十六进制", "预览", "磁盘视图"].map((t, i) => (
            <div
              key={t}
              className={`flex h-[24px] w-[89px] items-center justify-center rounded-t-[4px] border border-b-0 border-[#d5e0f0] pt-px ${i === 0 ? "-mb-px bg-white text-[#1e5ae0]" : "bg-[#eff3f9] text-[#444]"}`}
            >
              {t}
            </div>
          ))}
        </div>
        <div className="flex flex-1">
          <div className="w-[8px] bg-[#f1f1f1]" />
          <div className="pl-px font-['Liberation_Mono','Noto_Sans_CJK_SC',monospace] text-[12px] leading-[16.1px] tracking-[-1.2px] text-[#222]">
            {details.map((d) => <Detail key={d} text={d} />)}
          </div>
        </div>
        <div className="absolute bottom-[8px] right-[15px] text-[14px] text-[#a3a3a3]">CSDN @Grignard_</div>
      </div>
    </div>
  );
}
